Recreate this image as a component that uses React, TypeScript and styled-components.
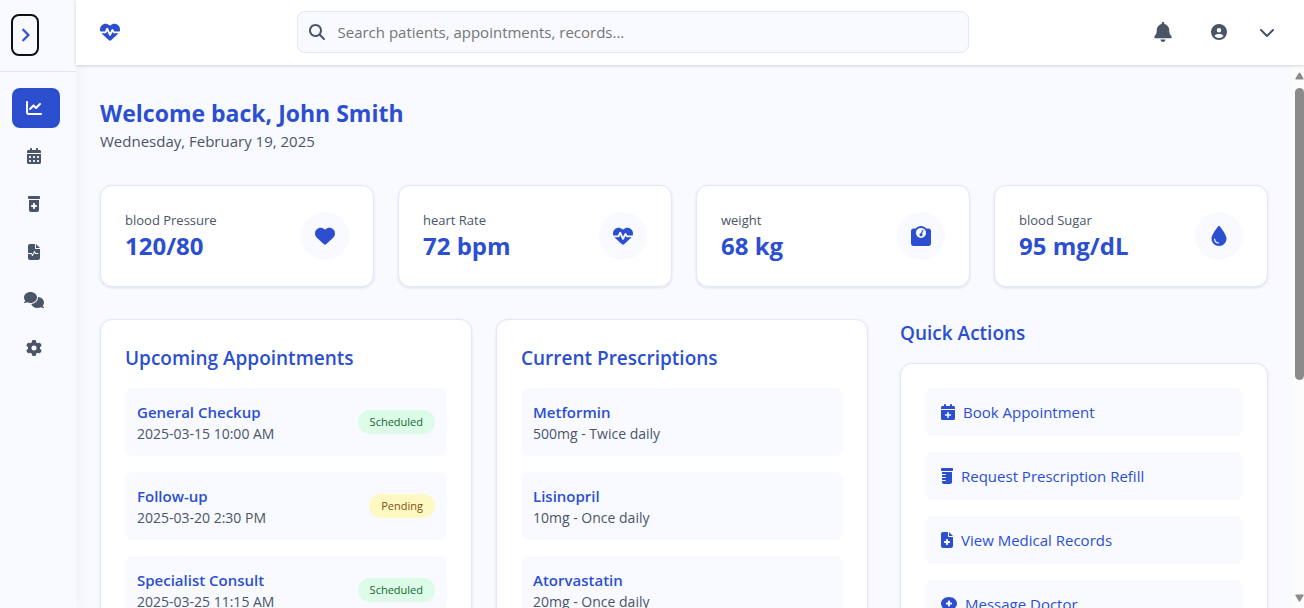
import React from 'react';
import styled, { createGlobalStyle } from 'styled-components';
import type { IconType } from 'react-icons';
import {
  FaBell,
  FaCalendarDays,
  FaCalendarPlus,
  FaChartLine,
  FaChevronDown,
  FaChevronRight,
  FaCircleUser,
  FaCommentMedical,
  FaComments,
  FaDroplet,
  FaFileMedical,
  FaFileWaveform,
  FaGear,
  FaHeart,
  FaHeartPulse,
  FaMagnifyingGlass,
  FaPrescriptionBottle,
  FaPrescriptionBottleMedical,
  FaWeightScale,
} from 'react-icons/fa6';

const color = {
  primary: '#2c4fd0',
  surface: '#f8faff',
  border: '#e0e7ff',
  text: '#4a5568',
  white: '#ffffff',
};

const GlobalStyle = createGlobalStyle`
  *, *::before, *::after { box-sizing: border-box; }
  body {
    margin: 0;
    background: ${color.surface};
    color: ${color.text};
    font-family: 'Open Sans', 'Noto Sans', sans-serif;
    font-size: 15px;
    line-height: 24px;
  }
  h1, h2, h3, p, ul { margin: 0; padding: 0; }
  ul { list-style: none; }
  button, input { font: inherit; color: inherit; }
  button { border: 0; background: none; padding: 0; cursor: pointer; }
  a { color: inherit; text-decoration: none; }
`;

const Shell = styled.div`
  display: flex;
  height: 100vh;
  overflow: hidden;
`;

const Sidebar = styled.aside`
  flex: none;
  width: 76px;
  background: ${color.surface};
  box-shadow: 4px 0 12px rgba(0, 0, 0, 0.03);
  z-index: 1;
`;

const SidebarTop = styled.div`
  display: flex;
  align-items: center;
  height: 72px;
  padding: 0 11px 1px;
  border-bottom: 1px solid ${color.border};
`;

const ToggleButton = styled.button`
  display: flex;
  align-items: center;
  justify-content: center;
  width: 28px;
  height: 42px;
  border: 2px solid #101010;
  border-radius: 8px;
  color: ${color.primary};

  svg {
    stroke: currentColor;
    stroke-width: 24;
  }
`;

const NavList = styled.ul`
  display: grid;
  gap: 8px;
  padding: 16px 16px 16px 12px;
`;

const NavLink = styled.a<{ $active?: boolean }>`
  display: flex;
  align-items: center;
  height: 40px;
  padding: 0 12px;
  border-radius: 8px;
  background: ${(p) => (p.$active ? color.primary : 'transparent')};
  color: ${(p) => (p.$active ? color.white : color.text)};

  svg {
    flex: none;
    width: 20px;
    height: 16px;
  }
`;

const Page = styled.div`
  display: flex;
  flex: 1;
  flex-direction: column;
  min-width: 0;
`;

const TopBar = styled.header`
  display: flex;
  flex: none;
  align-items: center;
  justify-content: space-between;
  height: 65px;
  padding: 0 21px 1px 24px;
  background: ${color.white};
  box-shadow: 0 1px 3px rgba(0, 0, 0, 0.16);
  z-index: 2;
`;

const Brand = styled.a`
  display: flex;
  color: ${color.primary};
`;

const SearchBox = styled.label`
  display: flex;
  flex: 0 1 672px;
  align-items: center;
  gap: 12px;
  height: 42px;
  padding: 0 11px;
  border: 1px solid ${color.border};
  border-radius: 8px;
  background: ${color.surface};
`;

const SearchInput = styled.input`
  flex: 1;
  min-width: 0;
  padding: 0 1px;
  border: 0;
  outline: 0;
  background: transparent;

  &::placeholder {
    color: #757575;
    opacity: 1;
  }
`;

const TopActions = styled.div`
  display: flex;
  align-items: center;
  gap: 22px;
`;

const TopButton = styled.button`
  display: flex;
  align-items: center;
  gap: 32px;
  padding: 8px;
`;

const ScrollRow = styled.div`
  display: flex;
  flex: 1;
  min-height: 0;
`;

const Main = styled.main`
  flex: 1;
  min-width: 0;
  overflow: hidden;
  padding: 32px 24px;
`;

const ScrollTrack = styled.div`
  display: flex;
  flex: none;
  flex-direction: column;
  align-items: flex-end;
  justify-content: space-between;
  width: 12px;
  padding: 7px 0 6px;
  background: #fcfcfc;
  color: #8b8b8b;
`;

const ScrollThumb = styled.span`
  flex: 0 0 55%;
  width: 9px;
  margin: 8px 0 auto;
  border-radius: 5px;
  background: currentColor;
`;

const PageTitle = styled.h1`
  color: ${color.primary};
  font-size: 23px;
  font-weight: 700;
  line-height: 32px;
`;

const StatGrid = styled.section`
  display: grid;
  grid-template-columns: repeat(4, 1fr);
  gap: 24px;
  margin: 32px 0;
`;

const Card = styled.section`
  padding: 24px;
  border: 1px solid ${color.border};
  border-radius: 12px;
  background: ${color.white};
  box-shadow: 0 1px 3px rgba(0, 0, 0, 0.1);
`;

const StatCard = styled(Card).attrs({ as: 'article' })`
  display: flex;
  align-items: center;
  justify-content: space-between;
`;

const StatLabel = styled.p`
  font-size: 13px;
  line-height: 20px;
`;

const StatValue = styled.p`
  color: ${color.primary};
  font-size: 24px;
  font-weight: 700;
  line-height: 32px;
`;

const StatIcon = styled.span`
  display: flex;
  align-items: center;
  justify-content: center;
  width: 48px;
  height: 48px;
  border-radius: 50%;
  background: ${color.surface};
  color: ${color.primary};
`;

const ContentGrid = styled.div`
  display: grid;
  grid-template-columns: repeat(3, 1fr);
  gap: 32px;
  align-items: start;
`;

const RecordPanels = styled.div`
  display: grid;
  grid-column: span 2;
  grid-template-columns: repeat(2, 1fr);
  gap: 24px;
`;

const SectionTitle = styled.h2`
  margin-bottom: 16px;
  color: ${color.primary};
  font-size: 19px;
  font-weight: 600;
  line-height: 28px;
`;

const ItemList = styled.ul`
  display: grid;
  gap: 16px;
`;

const RecordItem = styled.li`
  display: flex;
  align-items: center;
  justify-content: space-between;
  padding: 12px;
  border-radius: 8px;
  background: ${color.surface};
`;

const RecordName = styled.h3`
  color: ${color.primary};
  font-size: 15px;
  font-weight: 600;
  line-height: 24px;
`;

const RecordDetail = styled.p`
  font-size: 14px;
  line-height: 20px;
`;

const StatusBadge = styled.span<{ $pending: boolean }>`
  padding: 4px 12px;
  border-radius: 12px;
  background: ${(p) => (p.$pending ? '#fef9c3' : '#dcfce7')};
  color: ${(p) => (p.$pending ? '#854d0e' : '#166534')};
  font-size: 11px;
  line-height: 16px;
`;

const ActionButton = styled.button<{ $iconWidth: number }>`
  display: flex;
  align-items: center;
  gap: 8px;
  width: 100%;
  height: 48px;
  padding: 0 16px;
  border-radius: 8px;
  background: ${color.surface};
  color: ${color.primary};

  svg {
    flex: none;
    width: ${(p) => p.$iconWidth}px;
    height: 16px;
  }
`;

const navItems: { label: string; icon: IconType }[] = [
  { label: 'Dashboard', icon: FaChartLine },
  { label: 'Appointments', icon: FaCalendarDays },
  { label: 'Prescriptions', icon: FaPrescriptionBottleMedical },
  { label: 'Medical records', icon: FaFileWaveform },
  { label: 'Messages', icon: FaComments },
  { label: 'Settings', icon: FaGear },
];

const stats: { label: string; value: string; icon: IconType }[] = [
  { label: 'blood Pressure', value: '120/80', icon: FaHeart },
  { label: 'heart Rate', value: '72 bpm', icon: FaHeartPulse },
  { label: 'weight', value: '68 kg', icon: FaWeightScale },
  { label: 'blood Sugar', value: '95 mg/dL', icon: FaDroplet },
];

const appointments = [
  { name: 'General Checkup', time: '2025-03-15 10:00 AM', status: 'Scheduled' },
  { name: 'Follow-up', time: '2025-03-20 2:30 PM', status: 'Pending' },
  { name: 'Specialist Consult', time: '2025-03-25 11:15 AM', status: 'Scheduled' },
];

const prescriptions = [
  { name: 'Metformin', dose: '500mg - Twice daily' },
  { name: 'Lisinopril', dose: '10mg - Once daily' },
  { name: 'Atorvastatin', dose: '20mg - Once daily' },
];

const actions: { label: string; icon: IconType; iconWidth: number }[] = [
  { label: 'Book Appointment', icon: FaCalendarPlus, iconWidth: 14 },
  { label: 'Request Prescription Refill', icon: FaPrescriptionBottle, iconWidth: 12 },
  { label: 'View Medical Records', icon: FaFileMedical, iconWidth: 12 },
  { label: 'Message Doctor', icon: FaCommentMedical, iconWidth: 16 },
];

function ScrollArrow({ down = false }: { down?: boolean }) {
  return (
    <svg width="9" height="8" viewBox="0 0 9 8" fill="currentColor">
      <path d={down ? 'M1 0.5h7q1 0 .6 .9L5.3 7q-.8 1-1.6 0L.4 1.4Q0 .5 1 .5z' : 'M1 7.5h7q1 0 .6-.9L5.3 1q-.8-1-1.6 0L.4 6.6Q0 7.5 1 7.5z'} />
    </svg>
  );
}

export default function App() {
  return (
    <>
      <GlobalStyle />
      <Shell>
        <Sidebar>
          <SidebarTop>
            <ToggleButton type="button" aria-label="Expand sidebar">
              <FaChevronRight size={14} />
            </ToggleButton>
          </SidebarTop>
          <nav aria-label="Main">
            <NavList>
              {navItems.map(({ label, icon: Icon }, i) => (
                <li key={label}>
                  <NavLink href="#" aria-label={label} $active={i === 0}>
                    <Icon />
                  </NavLink>
                </li>
              ))}
            </NavList>
          </nav>
        </Sidebar>

        <Page>
          <TopBar>
            <Brand href="#" aria-label="Home">
              <FaHeartPulse size={20} />
            </Brand>
            <SearchBox>
              <FaMagnifyingGlass size={16} />
              <SearchInput
                type="search"
                aria-label="Search"
                placeholder="Search patients, appointments, records..."
              />
            </SearchBox>
            <TopActions>
              <TopButton type="button" aria-label="Notifications">
                <FaBell size={20} />
              </TopButton>
              <TopButton type="button" aria-label="Account menu">
                <FaCircleUser size={16} />
                <FaChevronDown size={16} />
              </TopButton>
            </TopActions>
          </TopBar>

          <ScrollRow>
            <Main>
              <PageTitle>Welcome back, John Smith</PageTitle>
              <p>Wednesday, February 19, 2025</p>

              <StatGrid>
                {stats.map(({ label, value, icon: Icon }) => (
                  <StatCard key={label}>
                    <div>
                      <StatLabel>{label}</StatLabel>
                      <StatValue>{value}</StatValue>
                    </div>
                    <StatIcon>
                      <Icon size={20} />
                    </StatIcon>
                  </StatCard>
                ))}
              </StatGrid>

              <ContentGrid>
                <RecordPanels>
                  <Card>
                    <SectionTitle>Upcoming Appointments</SectionTitle>
                    <ItemList>
                      {appointments.map((a) => (
                        <RecordItem key={a.name}>
                          <div>
                            <RecordName>{a.name}</RecordName>
                            <RecordDetail>{a.time}</RecordDetail>
                          </div>
                          <StatusBadge $pending={a.status === 'Pending'}>{a.status}</StatusBadge>
                        </RecordItem>
                      ))}
                    </ItemList>
                  </Card>
                  <Card>
                    <SectionTitle>Current Prescriptions</SectionTitle>
                    <ItemList>
                      {prescriptions.map((p) => (
                        <RecordItem key={p.name}>
                          <div>
                            <RecordName>{p.name}</RecordName>
                            <RecordDetail>{p.dose}</RecordDetail>
                          </div>
                        </RecordItem>
                      ))}
                    </ItemList>
                  </Card>
                </RecordPanels>

                <section>
                  <SectionTitle>Quick Actions</SectionTitle>
                  <Card as="div">
                    <ItemList>
                      {actions.map(({ label, icon: Icon, iconWidth }) => (
                        <li key={label}>
                          <ActionButton type="button" $iconWidth={iconWidth}>
                            <Icon />
                            {label}
                          </ActionButton>
                        </li>
                      ))}
                    </ItemList>
                  </Card>
                </section>
              </ContentGrid>
            </Main>
            <ScrollTrack aria-hidden="true">
              <ScrollArrow />
              <ScrollThumb />
              <ScrollArrow down />
            </ScrollTrack>
          </ScrollRow>
        </Page>
      </Shell>
    </>
  );
}
